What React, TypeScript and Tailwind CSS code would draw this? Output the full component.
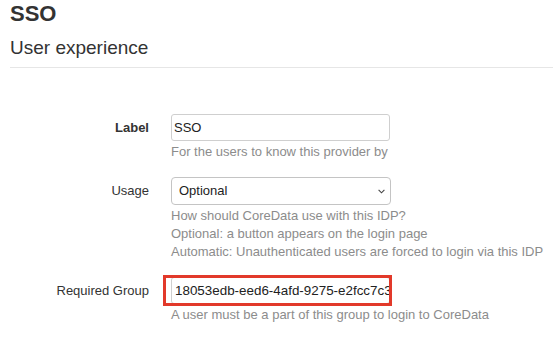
import React from "react";

const font = { fontFamily: '"Liberation Sans", Arial, sans-serif' };

function Row({
  label,
  bold,
  children,
  help,
  className = "",
}: {
  label: string;
  bold?: boolean;
  children: React.ReactNode;
  help: string[];
  className?: string;
}) {
  return (
    <div className={`grid grid-cols-[139px_219px] gap-x-[22px] ${className}`}>
      <div
        className={`flex h-[27px] items-center justify-end text-[13px] text-[#333] ${
          bold ? "font-bold" : ""
        }`}
      >
        {label}
      </div>
      <div>
        {children}
        <div className="mt-[2px] whitespace-nowrap text-[13px] leading-[18px] text-[#8c8c8c]">
          {help.map((h) => (
            <div key={h}>{h}</div>
          ))}
        </div>
      </div>
    </div>
  );
}

export default function App() {
  return (
    <div className="min-h-[341px] w-[553px] bg-white pl-[10px] pt-[1px]" style={font}>
      <h1 className="text-[22px] font-bold leading-[26px] text-[#333]">SSO</h1>
      <h2 className="mt-[9px] text-[19px] leading-[24px] text-[#333]">User experience</h2>
      <div className="mt-[7px] h-px bg-[#e6e6e6]" />

      <div className="mt-[46px]">
        <Row label="Label" bold help={["For the users to know this provider by"]}>
          <input
            readOnly
            value="SSO"
            className="block h-[27px] w-[219px] rounded-[3px] border border-[#cfcfcf] bg-white pl-[2px] text-[13px] text-[#222] outline-none"
          />
        </Row>

        <Row
          className="mt-[16px]"
          label="Usage"
          help={[
            "How should CoreData use with this IDP?",
            "Optional: a button appears on the login page",
            "Automatic: Unauthenticated users are forced to login via this IDP",
          ]}
        >
          <div className="relative h-[28px] w-[220px]">
            <select
              defaultValue="Optional"
              className="block h-[28px] w-[220px] appearance-none rounded-[4px] border border-[#c4c4c4] bg-white pl-[7px] text-[13px] text-[#222] outline-none"
            >
              <option>Optional</option>
              <option>Automatic</option>
            </select>
            <svg
              className="pointer-events-none absolute left-[207px] top-[12px]"
              width="7"
              height="5"
              viewBox="0 0 7 5"
            >
              <path d="M0.6 0.8 L3.5 3.8 L6.4 0.8" fill="none" stroke="#444" strokeWidth="1.1" />
            </svg>
          </div>
        </Row>

        <Row
          className="mt-[16px]"
          label="Required Group"
          help={["A user must be a part of this group to login to CoreData"]}
        >
          <div className="relative">
            <input
              readOnly
              value="18053edb-eed6-4afd-9275-e2fcc7c3a1b2"
              className="block h-[27px] w-[219px] rounded-[3px] border border-[#cfcfcf] bg-white pl-[3px] text-[13.4px] text-[#222] outline-none"
            />
            <div className="pointer-events-none absolute -bottom-[2px] -left-[8px] -right-[2px] -top-[2px] border-[3px] border-[#e2392a]" />
          </div>
        </Row>
      </div>
    </div>
  );
}
